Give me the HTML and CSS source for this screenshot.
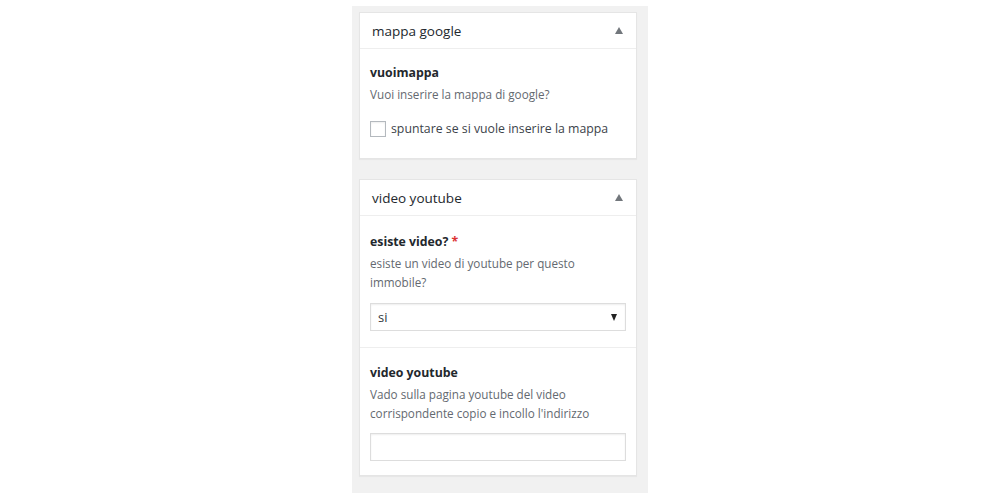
FILE: index.html
```html
<!DOCTYPE HTML>
<html>
<head>
<meta name="viewport" content="width=device-width, initial-scale=1.0">
<link rel="stylesheet" href="styles.css">
</head>
<body>
<div class="sidebar">
  <div class="postbox">
    <div class="hndle">
      <span>mappa google</span>
      <span class="toggle"></span>
    </div>
    <div class="inside">
      <div class="field">
        <div class="label">vuoimappa</div>
        <p class="description">Vuoi inserire la mappa di google?</p>
        <label class="check-row">
          <span class="checkbox"></span>
          spuntare se si vuole inserire la mappa
        </label>
      </div>
    </div>
  </div>

  <div class="postbox">
    <div class="hndle">
      <span>video youtube</span>
      <span class="toggle"></span>
    </div>
    <div class="inside">
      <div class="field">
        <div class="label">esiste video? <span class="required">*</span></div>
        <p class="description">esiste un video di youtube per questo immobile?</p>
        <div class="select">
          <span>si</span>
          <span class="caret"></span>
        </div>
      </div>
      <div class="field last">
        <div class="label">video youtube</div>
        <p class="description">Vado sulla pagina youtube del video corrispondente copio e incollo l'indirizzo</p>
        <div class="text-input"></div>
      </div>
    </div>
  </div>
</div>
</body>
</html>
```

FILE: styles.css
```css
* {
  box-sizing: border-box;
}
body {
  margin: 0;
  padding-top: 6px;
  background: #fff;
  font-family: "Open Sans", "Noto Sans", sans-serif;
  color: #23282d;
}
.sidebar {
  width: 296px;
  margin: 0 auto;
  padding: 6px 11px 17px 7px;
  background: #f1f1f1;
}
.postbox {
  background: #fff;
  border: 1px solid #e5e5e5;
  box-shadow: 0 1px 1px rgba(0, 0, 0, 0.04);
  margin-bottom: 20px;
}
.postbox:last-child {
  margin-bottom: 0;
}
.hndle {
  display: flex;
  align-items: center;
  justify-content: space-between;
  height: 36px;
  padding: 0 13px 0 12px;
  border-bottom: 1px solid #eee;
  font-size: 13.5px;
}
.toggle {
  width: 0;
  height: 0;
  border-left: 4px solid transparent;
  border-right: 4px solid transparent;
  border-bottom: 7px solid #72777c;
}
.field {
  padding: 16px 10px 16px 10px;
  border-top: 1px solid #eee;
}
.field:first-child {
  border-top: 0;
}
.postbox:first-child .field {
  padding-top: 14px;
}
.field.last {
  padding-top: 15px;
  padding-bottom: 14px;
}
.label {
  font-size: 12.3px;
  font-weight: 700;
  line-height: 20px;
}
.required {
  color: #dc3232;
}
.description {
  margin: 2px 0 0;
  font-size: 11.7px;
  line-height: 19px;
  color: #646970;
  padding-right: 20px;
}
.check-row {
  display: flex;
  align-items: center;
  gap: 5px;
  margin-top: 15px;
  margin-bottom: 4px;
  font-size: 12.3px;
  line-height: 19px;
  color: #3c434a;
}
.checkbox {
  width: 16px;
  height: 16px;
  border: 1px solid #b4b9be;
  background: #fff;
  box-shadow: inset 0 1px 2px rgba(0, 0, 0, 0.07);
}
.select {
  display: flex;
  align-items: center;
  justify-content: space-between;
  height: 28px;
  margin-top: 11px;
  padding: 0 8px 0 7px;
  border: 1px solid #ddd;
  box-shadow: inset 0 1px 2px rgba(0, 0, 0, 0.07);
  font-size: 13px;
  color: #32373c;
}
.caret {
  width: 0;
  height: 0;
  border-left: 3.5px solid transparent;
  border-right: 3.5px solid transparent;
  border-top: 7px solid #222;
}
.text-input {
  height: 28px;
  margin-top: 10px;
  border: 1px solid #ddd;
  box-shadow: inset 0 1px 2px rgba(0, 0, 0, 0.07);
}
```
